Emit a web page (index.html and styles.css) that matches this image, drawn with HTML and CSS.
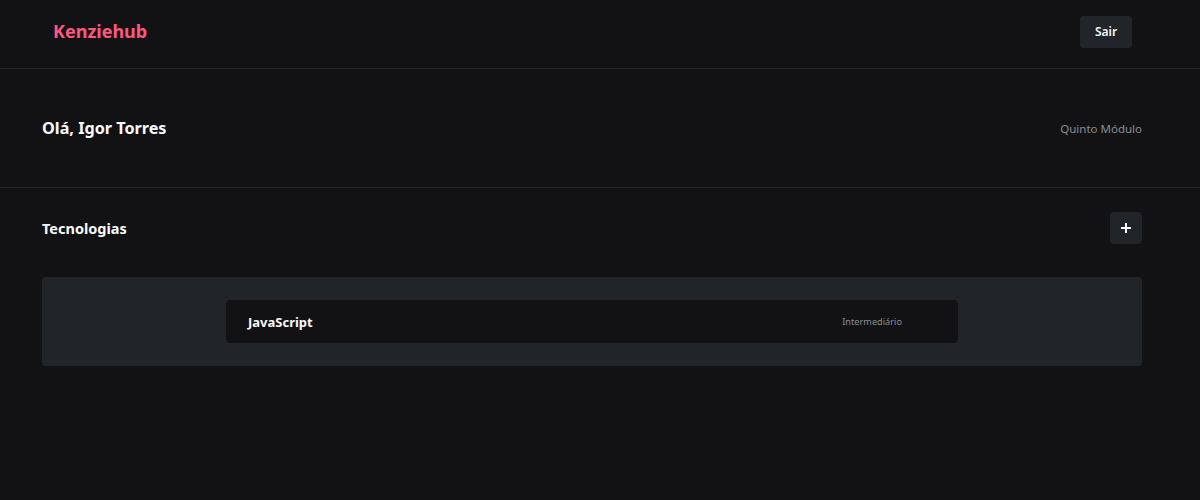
FILE: index.html
```html
<!DOCTYPE html>
<html lang="pt-BR">
<head>
<meta charset="utf-8">
<title>Kenziehub</title>
<link rel="stylesheet" href="styles.css">
</head>
<body>
<header class="topbar">
  <h1 class="logo">Kenziehub</h1>
  <button class="btn-exit">Sair</button>
</header>
<section class="welcome">
  <h2 class="welcome-name">Olá, Igor Torres</h2>
  <span class="welcome-module">Quinto Módulo</span>
</section>
<main class="techs">
  <div class="techs-head">
    <h3 class="techs-title">Tecnologias</h3>
    <button class="btn-add" aria-label="Adicionar">
      <svg width="12" height="12" viewBox="0 0 12 12"><path d="M6 1v10M1 6h10" stroke="#fff" stroke-width="2"/></svg>
    </button>
  </div>
  <ul class="tech-list">
    <li class="tech-item">
      <span class="tech-name">JavaScript</span>
      <span class="tech-level">Intermediário</span>
    </li>
  </ul>
</main>
</body>
</html>
```
FILE: styles.css
```css
* { box-sizing: border-box; margin: 0; padding: 0; }
html, body { background: #121214; }
body { font-family: "Noto Sans", Inter, sans-serif; color: #f8f9fa; width: 1200px; height: 500px; overflow: hidden; }
.topbar { height: 69px; display: flex; align-items: center; justify-content: space-between; padding: 0 68px 0 53px; border-bottom: 1px solid #212529; }
.logo { color: #ff577f; font-size: 18px; font-weight: 700; margin-top: -6px; }
.btn-exit { width: 52px; height: 32px; background: #212529; border: none; border-radius: 4px; color: #f8f9fa; font-family: inherit; font-size: 12px; font-weight: 600; margin-top: -5px; }
.welcome { height: 119px; display: flex; align-items: center; justify-content: space-between; padding: 0 58px 0 42px; border-bottom: 1px solid #212529; }
.welcome-name { font-size: 16.2px; font-weight: 700; }
.welcome-module { font-size: 11.5px; color: #868e96; }
.techs { padding: 24px 58px 0 42px; }
.techs-head { display: flex; align-items: center; justify-content: space-between; height: 32px; }
.techs-title { font-size: 14.5px; font-weight: 700; }
.btn-add { width: 32px; height: 32px; background: #212529; border: none; border-radius: 4px; display: flex; align-items: center; justify-content: center; }
.tech-list { list-style: none; margin-top: 33px; background: #212529; border-radius: 4px; padding: 23px 0; display: flex; flex-direction: column; align-items: center; }
.tech-item { width: 732px; height: 43px; background: #121214; border-radius: 4px; display: flex; align-items: center; justify-content: space-between; padding: 0 56px 0 22px; }
.tech-name { font-size: 13px; font-weight: 700; }
.tech-level { font-size: 9.2px; color: #868e96; }
```
